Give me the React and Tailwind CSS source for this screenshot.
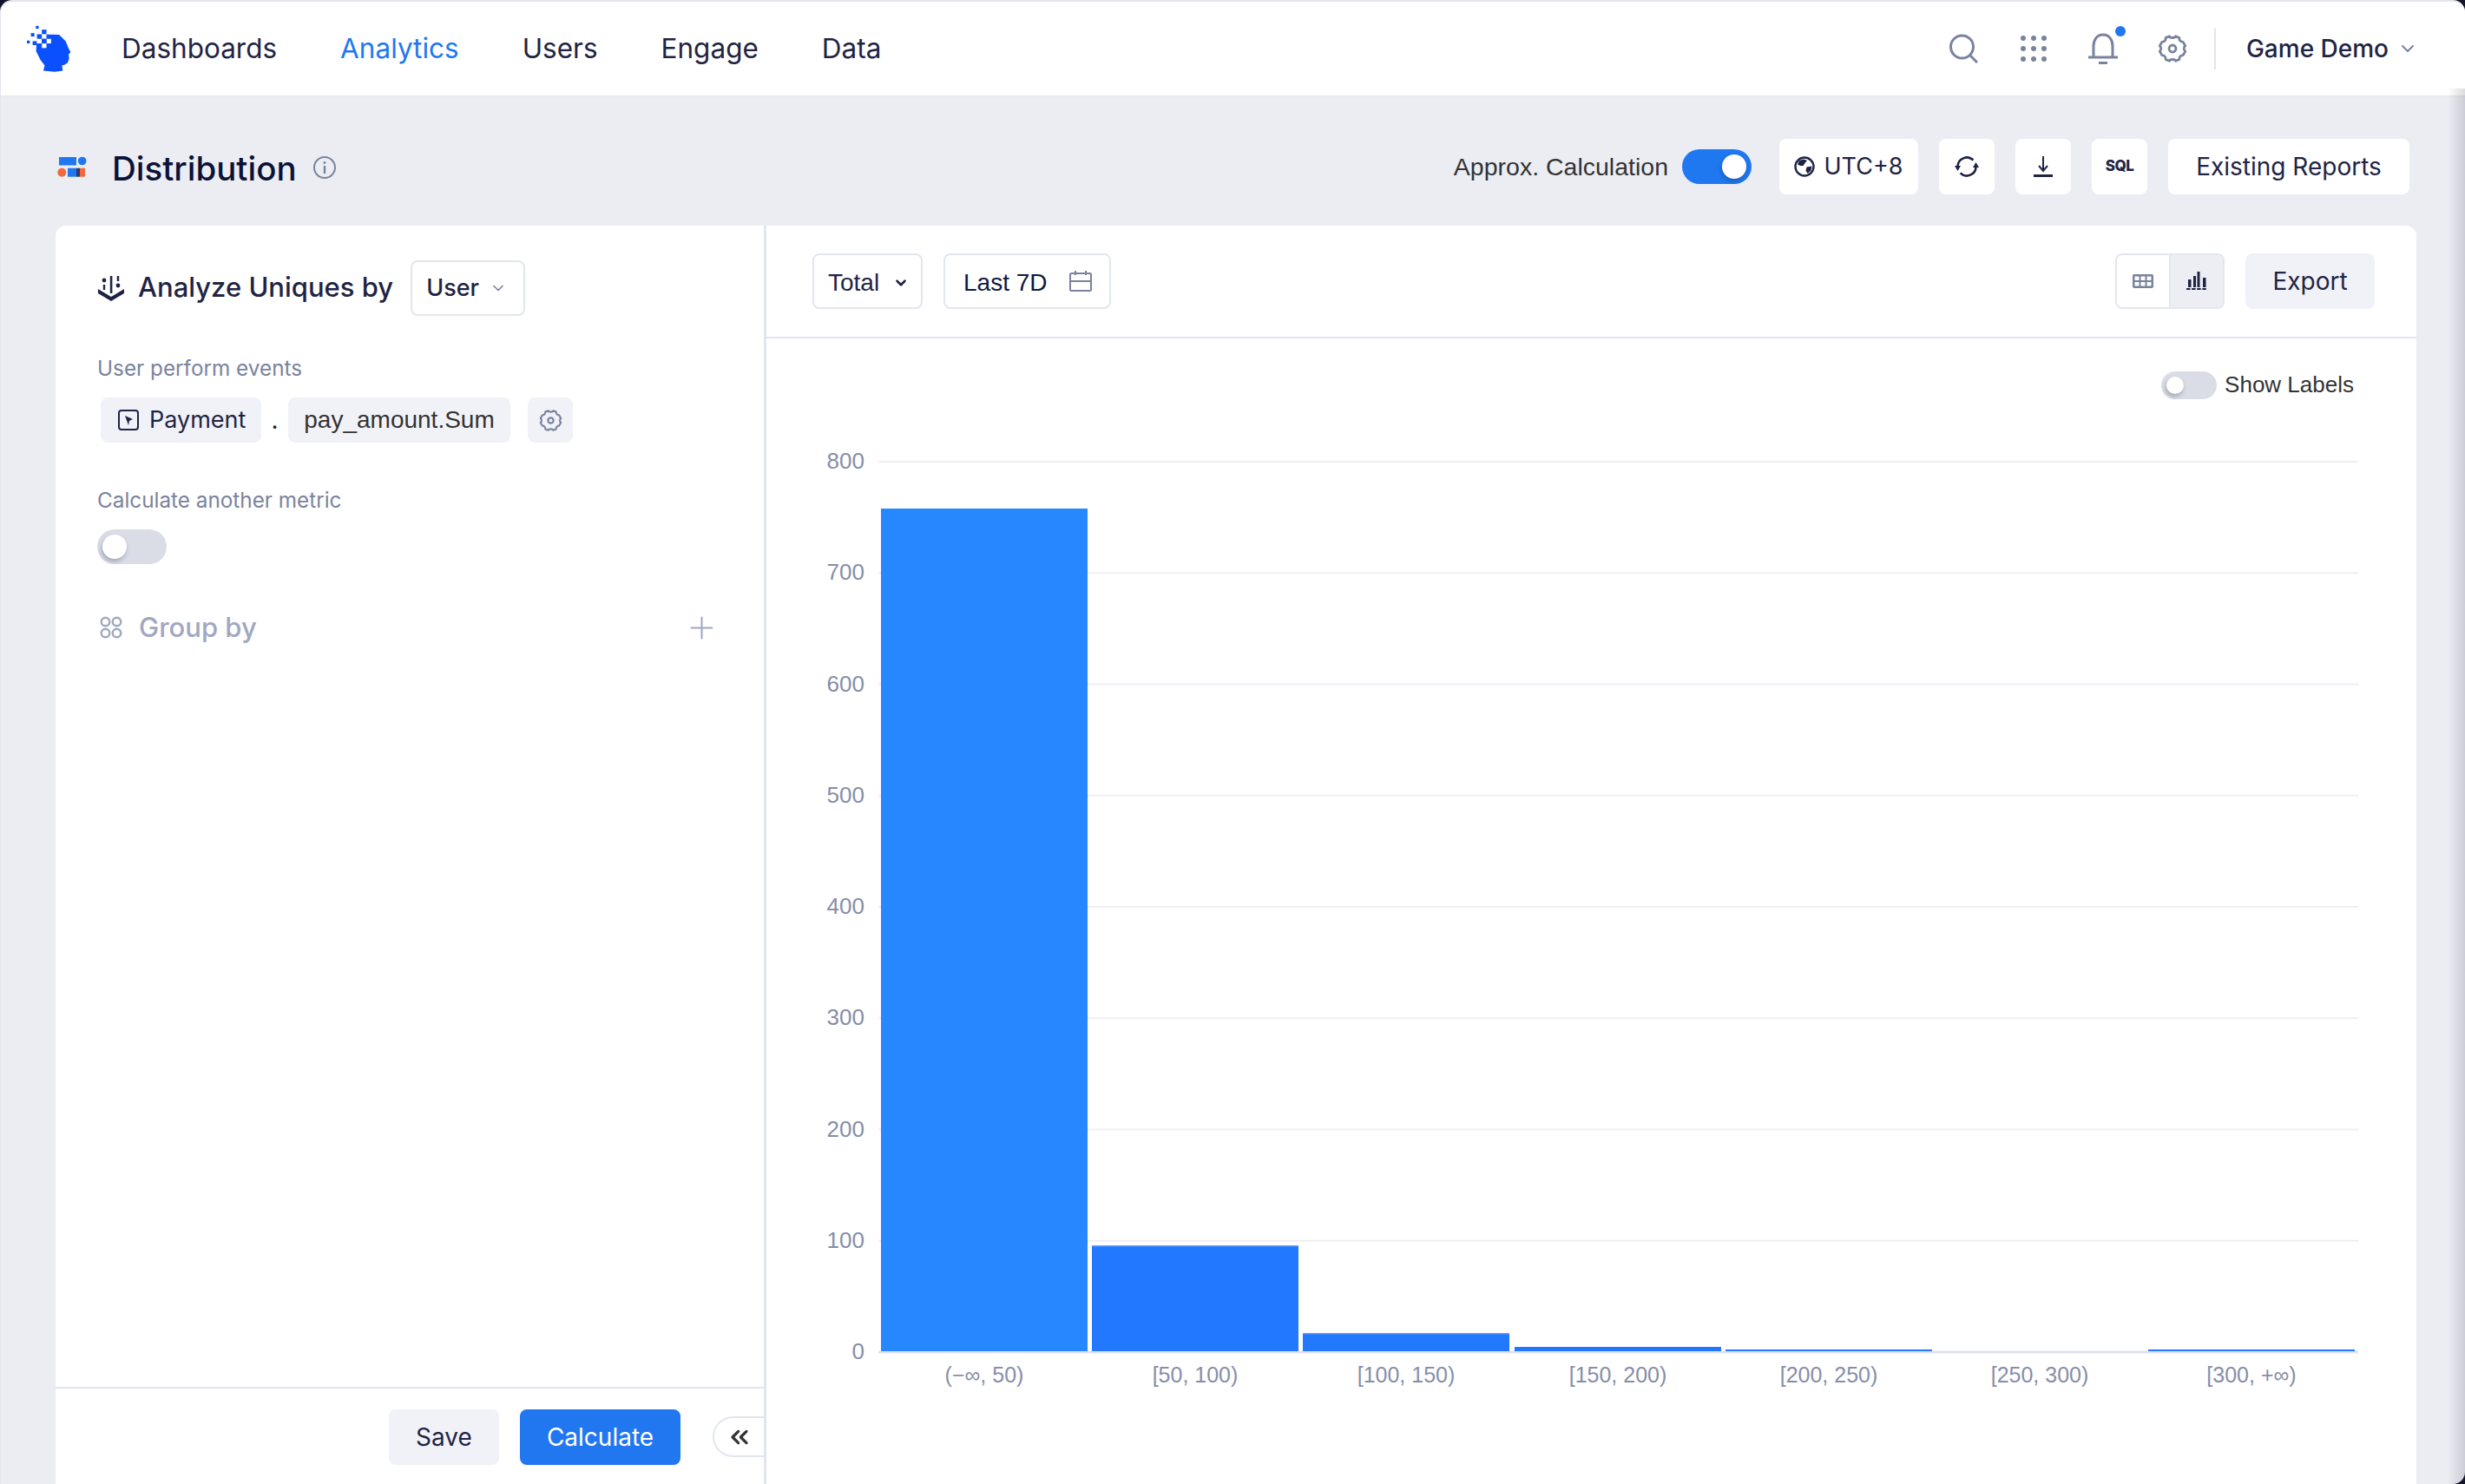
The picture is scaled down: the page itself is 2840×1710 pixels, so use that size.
import { ChevronDown, Plus, ChevronsLeft } from "lucide-react";

const yTicks = [0, 100, 200, 300, 400, 500, 600, 700, 800];

const bars = [
  { label: "(−∞, 50)", x: 132, h: 971, fill: "#2688ff", edge: "#2688ff" },
  { label: "[50, 100)", x: 375, h: 122, fill: "#2279ff", edge: "#5c9dff" },
  { label: "[100, 150)", x: 618, h: 21, fill: "#2279ff", edge: "#5c9dff" },
  { label: "[150, 200)", x: 862, h: 5, fill: "#2279ff", edge: "#2279ff" },
  { label: "[200, 250)", x: 1105, h: 2, fill: "#2279ff", edge: "#2279ff" },
  { label: "[250, 300)", x: 1348, h: 0, fill: "#2279ff", edge: "#2279ff" },
  { label: "[300, +∞)", x: 1592, h: 2, fill: "#2279ff", edge: "#2279ff" },
];

function Logo() {
  return (
    <svg viewBox="90 85 160 165" className="w-[53px] h-[55px] shrink-0">
      <path
        d="M126 158 L128 140 L145 116 L205 118 L228 140 L238 165 L245 178 L238 186 L240 200 L235 215 L225 222 L215 225 L218 243 L190 247 L150 243 L155 225 L140 205 L125 175 Z"
        fill="#0a50ff"
      />
      <rect x="124" y="87" width="10" height="10" fill="#0a50ff" />
      <rect x="107" y="112" width="12" height="12" fill="#0a50ff" />
      <rect x="93" y="138" width="10" height="10" fill="#0a50ff" />
      <rect x="113" y="140" width="14" height="14" fill="#0a50ff" />
      <rect x="145" y="100" width="16" height="16" fill="#0a50ff" />
      <rect x="128" y="116" width="16" height="16" fill="#0a50ff" />
      <rect x="145" y="116" width="16" height="16" fill="#fff" />
      <rect x="161" y="132" width="16" height="16" fill="#fff" />
      <rect x="128" y="132" width="17" height="16" fill="#fff" />
      <rect x="145" y="148" width="16" height="16" fill="#fff" />
      <rect x="145" y="132" width="16" height="16" fill="#0a50ff" />
    </svg>
  );
}

function DistIcon() {
  return (
    <svg viewBox="0 0 36 26" className="w-9 h-[26px] shrink-0">
      <rect x="2" y="2" width="20" height="9.5" fill="#1f78f0" />
      <circle cx="28.7" cy="6.5" r="4.8" fill="#1f78f0" />
      <circle cx="5.3" cy="19.7" r="5" fill="#f2693f" />
      <rect x="12" y="14.7" width="10" height="10" fill="#1f78f0" />
      <rect x="22" y="14.7" width="4" height="10" fill="#2b3a66" />
      <rect x="26" y="14.7" width="6" height="10" fill="#f2693f" />
    </svg>
  );
}

function Toggle({ on, w, h, knob }) {
  return (
    <div
      className={`${w} ${h} rounded-full flex items-center px-[6px] shrink-0 ${
        on ? "bg-[#1f78f0] justify-end" : "bg-[#dadde6] justify-start"
      }`}
    >
      <div
        className={`${knob} rounded-full bg-white shadow-[-1px_3px_5px_rgba(30,40,70,0.3)]`}
      />
    </div>
  );
}

function GearIcon({ className, width = 2 }) {
  return (
    <svg viewBox="0 0 24 24" className={className} fill="none" stroke="#7a839e" strokeWidth={width} strokeLinejoin="round">
      <path d="M9.4 2 C10 3.6 14 3.6 14.6 2 L17.6 3.2 C17 5 19 6.8 20.6 6.6 L22.4 9.8 C21 10.8 21 13.2 22.4 14.2 L20.6 17.4 C19 17.2 17 19 17.6 20.8 L14.6 22 C14 20.4 10 20.4 9.4 22 L6.4 20.8 C7 19 5 17.2 3.4 17.4 L1.6 14.2 C3 13.2 3 10.8 1.6 9.8 L3.4 6.6 C5 6.8 7 5 6.4 3.2 Z" />
      <circle cx="12" cy="12" r="2.8" />
    </svg>
  );
}

function ChartPanel() {
  const fontFamily = "'Liberation Sans', sans-serif";
  return (
    <svg viewBox="0 0 1901 1210" className="w-[1901px] h-[1210px] block">
      {yTicks.map((t) => {
        const y = 1057 - 128.25 * t / 100;
        return (
          <g key={t}>
            <line
              x1="129"
              x2="1834"
              y1={y}
              y2={y}
              stroke={t === 0 ? "#dfe2ec" : "#eeeff4"}
              strokeWidth={t === 0 ? 3 : 2}
            />
            <text
              x="113"
              y={y + 8}
              textAnchor="end"
              fontSize="26"
              fill="#868ea8"
              fontFamily={fontFamily}
            >
              {t}
            </text>
          </g>
        );
      })}
      {bars.map((b) => (
        <g key={b.label}>
          {b.h > 0 && (
            <>
              <rect x={b.x} y={1056 - b.h} width="238" height={b.h} fill={b.fill} />
              <rect x={b.x} y={1056 - b.h} width="238" height="1.5" fill={b.edge} />
            </>
          )}
          <text
            x={b.x + 119}
            y="1092"
            textAnchor="middle"
            fontSize="25"
            fill="#868ea8"
            fontFamily={fontFamily}
          >
            {b.label}
          </text>
        </g>
      ))}
    </svg>
  );
}

export default function App() {
  const topBtn = "h-16 rounded-lg bg-white flex items-center justify-center";
  return (
    <div className="w-[2840px] h-[1710px] overflow-hidden bg-[#14142b]">
      <div
        className="relative w-full h-full flex flex-col bg-[#ecedf3] border-t-2 border-l border-[#e2e6ec] rounded-tl-[14px] rounded-tr-[14px] rounded-br-[14px] overflow-hidden text-[#1f2444]"
        style={{ fontFamily: "Inter, sans-serif" }}
      >
        {/* Top nav */}
        <header className="h-[109px] shrink-0 bg-white border-b border-[#e3e6ec] flex items-center pl-[29px] pr-[54px]">
          <Logo />
          <nav className="ml-[57px] flex items-center gap-[73px] text-[31.5px]">
            <span>Dashboards</span>
            <span className="text-[#1f78f0]">Analytics</span>
            <span>Users</span>
            <span>Engage</span>
            <span>Data</span>
          </nav>
          <div className="ml-auto flex items-center">
            <svg viewBox="0 0 34 34" className="w-[34px] h-[34px]" fill="none" stroke="#7a839e" strokeWidth="3">
              <circle cx="15.5" cy="15" r="13" />
              <path d="M25 25 L33 33" />
            </svg>
            <svg viewBox="0 0 30 30" className="w-[30px] h-[30px] ml-[49px]" fill="#7a839e">
              {[3, 15, 27].map((cy) =>
                [3, 15, 27].map((cx) => <circle key={`${cx}-${cy}`} cx={cx} cy={cy} r="3" />)
              )}
            </svg>
            <div className="relative ml-[48px] w-[34px] h-[36px]">
              <svg viewBox="0 0 34 36" className="w-[34px] h-[36px]" fill="none" stroke="#7a839e" strokeWidth="3">
                <path d="M6 27 V15 C6 8 10 2 17 2 C24 2 28 8 28 15 V27" />
                <path d="M0 28 H34" />
                <path d="M12 34.5 H22" strokeWidth="3" />
              </svg>
              <div className="absolute top-[-8px] right-[-9px] w-3 h-3 rounded-full bg-[#1f78f0]" />
            </div>
            <GearIcon className="w-[34px] h-[34px] ml-[46px]" />
            <div className="w-[2px] h-12 bg-[#e2e5ec] ml-[31px]" />
            <span className="ml-[35px] text-[28px] font-medium">Game Demo</span>
            <ChevronDown className="w-[24px] h-[24px] ml-[10px] text-[#7a839e]" strokeWidth={2} />
          </div>
        </header>

        {/* Title row */}
        <div className="h-[149px] shrink-0 pl-[65px] pr-[64px] pt-[49px] flex items-start">
          <div className="h-16 flex items-center">
            <DistIcon />
            <h1 className="ml-[27px] pt-[6px] text-[38.5px] font-medium text-[#0b1238]">Distribution</h1>
            <svg viewBox="0 0 26 26" className="ml-[19px] mt-[2px] w-[26px] h-[26px]" fill="none" stroke="#7a839e" strokeWidth="2">
              <circle cx="13" cy="13" r="12" />
              <path d="M13 11 V20" strokeWidth="2.4" />
              <circle cx="13" cy="7.5" r="1.4" fill="#7a839e" stroke="none" />
            </svg>
          </div>
          <div className="ml-auto flex items-center">
            <span
              className="pt-px text-[28.5px] text-[#333]"
              style={{ fontFamily: "'Liberation Sans', sans-serif" }}
            >
              Approx. Calculation
            </span>
            <div className="ml-4">
              <Toggle on w="w-20" h="h-10" knob="w-7 h-7" />
            </div>
            <div className={`${topBtn} ml-8 w-40 gap-[10px] text-[27px]`}>
              <svg viewBox="0 0 24 24" className="w-6 h-6">
                <circle cx="12" cy="12" r="10.5" fill="#fff" stroke="#1f2444" strokeWidth="2.4" />
                <path d="M6 5 L11 3.5 L15 5 L12.5 8 L10.5 11 L7 11 L4 9.5 Z" fill="#1f2444" />
                <path d="M14.5 12.5 L20.5 11.5 L19.5 16.5 L15.5 20 L13.5 16.5 Z" fill="#1f2444" />
              </svg>
              <span>UTC+8</span>
            </div>
            <div className={`${topBtn} ml-6 w-16`}>
              <svg viewBox="0 0 28 28" className="w-7 h-7" fill="none" stroke="#1f2444" strokeWidth="2.6">
                <path d="M21.4 6.6 A10.5 10.5 0 0 0 3.5 14" />
                <path d="M6.6 21.4 A10.5 10.5 0 0 0 24.5 14" />
                <path d="M0 13 H7 L3.5 19 Z" fill="#1f2444" stroke="none" />
                <path d="M21 15 H28 L24.5 9 Z" fill="#1f2444" stroke="none" />
              </svg>
            </div>
            <div className={`${topBtn} ml-6 w-16`}>
              <svg viewBox="0 0 22 24" className="w-[22px] h-6" fill="none" stroke="#1f2444" strokeWidth="2">
                <path d="M11 0 V16" />
                <path d="M6 11 L11 17 L16 11" />
                <path d="M0 22.5 H22" strokeWidth="3" />
              </svg>
            </div>
            <div className={`${topBtn} ml-6 w-16 text-[17px] font-extrabold tracking-[-0.5px]`}>
              SQL
            </div>
            <div className={`${topBtn} ml-6 w-[278px] text-[28px]`}>Existing Reports</div>
          </div>
        </div>

        {/* Main */}
        <main className="flex-1 min-h-0 flex ml-[63px] mr-[56px] bg-white rounded-t-xl overflow-hidden">
          {/* Left panel */}
          <aside className="w-[819px] shrink-0 border-r-[3px] border-[#e2e6ec] flex flex-col">
            <div className="flex-1 pl-[49px] pr-[33px] pt-10">
              <div className="flex items-center h-16">
                <svg viewBox="0 0 30 29" className="w-[30px] h-[29px]" fill="#1f2444">
                  <path d="M0 15 V20 L15 29 L30 20 V15 L15 24 Z" />
                  <rect x="13.8" y="0" width="2.6" height="20" />
                  <circle cx="7" cy="5" r="2.4" />
                  <rect x="5.8" y="10" width="2.4" height="6" />
                  <rect x="21.8" y="0" width="2.4" height="6" />
                  <circle cx="23" cy="11" r="2.4" />
                </svg>
                <span className="ml-4 -mt-[3px] text-[31px] font-medium leading-none">Analyze Uniques by</span>
                <div className="ml-5 w-[132px] h-16 rounded-lg border-2 border-[#e2e6ee] flex items-center pl-4 text-[27px] font-medium">
                  User
                  <ChevronDown className="w-5 h-5 ml-3 text-[#7a839e]" strokeWidth={2} />
                </div>
              </div>

              <div className="mt-[45px] -ml-px text-[24.3px] leading-[30px] text-[#7a839e]">User perform events</div>
              <div className="mt-[19px] flex items-center pl-[3px]">
                <div className="h-[52px] w-[185px] rounded-lg bg-[#f1f2f8] flex items-center pl-5 gap-3 text-[27px]">
                  <svg viewBox="0 0 24 24" className="w-6 h-6" fill="none" stroke="#1f2444" strokeWidth="2">
                    <rect x="1" y="1" width="22" height="22" rx="3" />
                    <path d="M8 7 L17 11 L13 13 L12 18 Z" fill="#1f2444" stroke="none" />
                  </svg>
                  Payment
                </div>
                <span className="w-[31px] text-center text-[28px]">.</span>
                <div
                  className="h-[52px] w-[256px] rounded-lg bg-[#f1f2f8] flex items-center justify-center text-[28px] text-[#333]"
                  style={{ fontFamily: "'Liberation Sans', sans-serif" }}
                >
                  pay_amount.Sum
                </div>
                <div className="ml-5 h-[52px] w-[52px] rounded-lg bg-[#f1f2f8] flex items-center justify-center">
                  <GearIcon className="w-[27px] h-[27px]" width={1.9} />
                </div>
              </div>

              <div className="mt-[51px] -ml-px text-[24.3px] leading-[30px] text-[#7a839e]">Calculate another metric</div>
              <div className="mt-[19px] -ml-px">
                <Toggle w="w-20" h="h-10" knob="w-7 h-7" />
              </div>

              <div className="mt-[53px] h-10 flex items-center">
                <svg viewBox="0 0 26 26" className="ml-[2px] w-[26px] h-[26px]" fill="none" stroke="#a0a8c0" strokeWidth="2.4">
                  <circle cx="6.5" cy="6.5" r="4.8" />
                  <circle cx="19.5" cy="6.5" r="4.8" />
                  <circle cx="6.5" cy="19.5" r="4.8" />
                  <circle cx="19.5" cy="19.5" r="4.8" />
                </svg>
                <span className="ml-[19px] text-[31px] font-medium text-[#a0a8c0]">Group by</span>
                <Plus className="ml-auto mr-[18px] w-[41px] h-[41px] text-[#a0a8c0]" strokeWidth={1.2} />
              </div>
            </div>

            <div className="h-[112px] shrink-0 border-t-2 border-[#e2e6ec] flex justify-end items-start pt-6 text-[28px]">
              <div className="w-[127px] h-16 rounded-lg bg-[#f1f2f8] flex items-center justify-center">Save</div>
              <div className="ml-6 w-[185px] h-16 rounded-lg bg-[#2077f0] text-white flex items-center justify-center">
                Calculate
              </div>
              <div className="ml-[37px] mt-2 w-[59px] h-[47px] rounded-l-full border-2 border-r-0 border-[#e2e6ee] flex items-center justify-center">
                <ChevronsLeft className="w-8 h-8 text-[#333]" strokeWidth={2.4} />
              </div>
            </div>
          </aside>

          {/* Right panel */}
          <section className="flex-1 min-w-0 flex flex-col">
            <div className="h-[130px] shrink-0 border-b-2 border-[#e2e6ec] flex items-start pt-8 pl-[53px] pr-[48px]">
              <div
                className="w-[127px] h-16 rounded-lg border-2 border-[#e2e6ee] flex items-center pl-[16px] pt-[3px] text-[28px]"
                style={{ fontFamily: "'Liberation Sans', sans-serif" }}
              >
                Total
                <ChevronDown className="ml-[16px] w-[18px] h-[18px]" strokeWidth={3.5} />
              </div>
              <div
                className="ml-6 w-[193px] h-16 rounded-lg border-2 border-[#e2e6ee] flex items-center pl-[21px] text-[28px] text-[#0e1a40]"
                style={{ fontFamily: "'Liberation Sans', sans-serif" }}
              >
                <span className="pt-[3px]">Last 7D</span>
                <svg viewBox="0 0 26 26" className="ml-[25px] w-[26px] h-[26px]" fill="none" stroke="#7a839e" strokeWidth="2">
                  <rect x="1" y="4" width="24" height="20" rx="1.5" />
                  <path d="M1 13 H25 M7 1 V6 M19 1 V6" />
                </svg>
              </div>
              <div className="ml-auto w-[126px] h-16 rounded-lg border-2 border-[#e2e6ee] flex overflow-hidden">
                <div className="flex-1 flex items-center justify-center border-r-2 border-[#e2e6ee]">
                  <svg viewBox="0 0 24 16" className="w-6 h-4">
                    <rect width="24" height="16" rx="2" fill="#7a839e" />
                    {[2.5, 9.5, 16.5].map((x) =>
                      [2.5, 9].map((y) => <rect key={`${x}-${y}`} x={x} y={y} width="5" height="4.5" fill="#fff" />)
                    )}
                  </svg>
                </div>
                <div className="flex-1 flex items-center justify-center bg-[#eceef4]">
                  <svg viewBox="0 0 24 22" className="w-6 h-[22px]" fill="#1f2444">
                    <rect x="2" y="9" width="3.5" height="9" />
                    <rect x="8" y="5" width="3" height="13" />
                    <rect x="12.5" y="0" width="3" height="18" />
                    <rect x="19" y="7" width="3.5" height="11" />
                    <path d="M0 20 H24" stroke="#1f2444" strokeWidth="2" strokeDasharray="4.5 1.6" />
                  </svg>
                </div>
              </div>
              <div className="ml-6 w-[149px] h-16 rounded-lg bg-[#f1f2f8] flex items-center justify-center text-[28px]">
                Export
              </div>
            </div>

            <div className="flex items-center justify-end pt-[38px] pr-[72px] gap-[9px]">
              <Toggle w="w-16" h="h-8" knob="w-5 h-5" />
              <span
                className="-mt-[2px] text-[26px] leading-8 text-[#333]"
                style={{ fontFamily: "'Liberation Sans', sans-serif" }}
              >
                Show Labels
              </span>
            </div>
            <div className="mt-[41px]">
              <ChartPanel />
            </div>
          </section>
        </main>

        {/* window edge shading */}
        <div className="absolute top-[100px] bottom-0 right-0 w-5 bg-gradient-to-r from-transparent to-[#14142b]/15 pointer-events-none" />
      </div>
    </div>
  );
}
